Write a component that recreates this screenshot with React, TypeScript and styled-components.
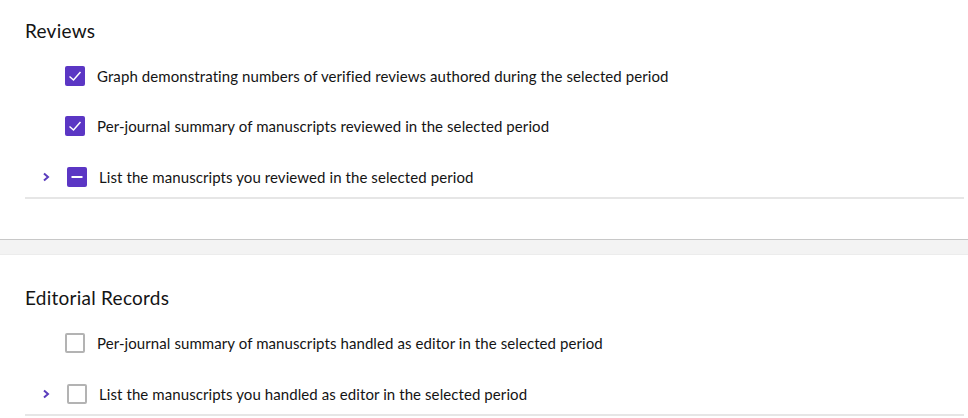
import React from "react";
import styled, { createGlobalStyle } from "styled-components";

const GlobalStyle = createGlobalStyle`
  body {
    margin: 0;
    background: #ffffff;
    font-family: Lato, "Noto Sans", sans-serif;
    color: #141414;
  }
`;

const Section = styled.section<{ $top: number }>`
  background: #ffffff;
  padding: ${(p) => p.$top}px 4px 40px 25px;
  border-bottom: 1px solid #c8c8c8;
`;

const Band = styled.div`
  height: 14px;
  background: #f3f3f3;
  border-bottom: 1px solid #ececec;
`;

const Title = styled.h2`
  margin: 0;
  font-size: 19px;
  font-weight: 400;
  line-height: 24px;
  letter-spacing: 0.25px;
`;

const List = styled.div`
  display: flex;
  flex-direction: column;
  gap: 10px;
  margin-top: 13px;
`;

const Row = styled.label<{ $expandable?: boolean }>`
  display: flex;
  align-items: center;
  height: 40px;
  padding-left: ${(p) => (p.$expandable ? 0 : 40)}px;
  border-bottom: ${(p) => (p.$expandable ? "2px solid #e6e6e6" : "none")};
  margin-top: ${(p) => (p.$expandable ? 1 : 0)}px;
  font-size: 15px;
  letter-spacing: 0.085px;
  cursor: pointer;
`;

const Chevron = styled.span`
  display: flex;
  align-items: center;
  width: 42px;
  padding-left: 17px;
  box-sizing: border-box;
  color: #5b3dbd;
`;

const Box = styled.span<{ $state: "checked" | "mixed" | "empty" }>`
  flex: none;
  display: flex;
  align-items: center;
  justify-content: center;
  width: 20px;
  height: 20px;
  box-sizing: border-box;
  border-radius: 2px;
  background: ${(p) => (p.$state === "empty" ? "#ffffff" : "#5b36c4")};
  border: ${(p) => (p.$state === "empty" ? "2px solid #b3b3b3" : "none")};
  margin-right: 12px;
`;

type RowData = { text: string; state: "checked" | "mixed" | "empty"; expandable?: boolean };

const reviews: RowData[] = [
  { text: "Graph demonstrating numbers of verified reviews authored during the selected period", state: "checked" },
  { text: "Per-journal summary of manuscripts reviewed in the selected period", state: "checked" },
  { text: "List the manuscripts you reviewed in the selected period", state: "mixed", expandable: true },
];

const editorial: RowData[] = [
  { text: "Per-journal summary of manuscripts handled as editor in the selected period", state: "empty" },
  { text: "List the manuscripts you handled as editor in the selected period", state: "empty", expandable: true },
];

const Mark = ({ state }: { state: RowData["state"] }) => {
  if (state === "checked")
    return (
      <svg width="16" height="16" viewBox="0 0 16 16">
        <polyline points="2.5,8.5 6.5,12 13.5,4" fill="none" stroke="#fff" strokeWidth="1.5" />
      </svg>
    );
  if (state === "mixed")
    return (
      <svg width="14" height="14" viewBox="0 0 14 14">
        <line x1="1.5" y1="7" x2="12.5" y2="7" stroke="#fff" strokeWidth="2" />
      </svg>
    );
  return null;
};

const Item = ({ row }: { row: RowData }) => (
  <Row $expandable={row.expandable}>
    {row.expandable && (
      <Chevron>
        <svg width="8" height="12" viewBox="0 0 8 12">
          <polyline points="2,2.5 6,6 2,9.5" fill="none" stroke="currentColor" strokeWidth="2" />
        </svg>
      </Chevron>
    )}
    <Box $state={row.state}>
      <Mark state={row.state} />
    </Box>
    {row.text}
  </Row>
);

const App: React.FC = () => (
  <>
    <GlobalStyle />
    <Section $top={19}>
      <Title>Reviews</Title>
      <List>
        {reviews.map((r) => (
          <Item key={r.text} row={r} />
        ))}
      </List>
    </Section>
    <Band />
    <Section $top={31}>
      <Title>Editorial Records</Title>
      <List>
        {editorial.map((r) => (
          <Item key={r.text} row={r} />
        ))}
      </List>
    </Section>
  </>
);

export default App;
